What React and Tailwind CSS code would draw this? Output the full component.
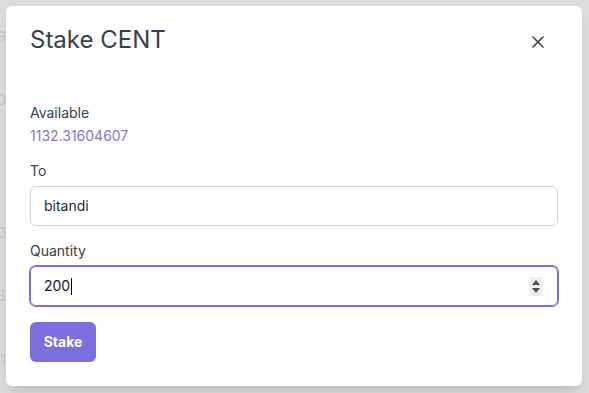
import React from "react";

const Field = ({ label, children }) => (
  <div className="flex flex-col">
    <label className="text-sm leading-5 text-[#374151] mb-[5px]">{label}</label>
    {children}
  </div>
);

const App = () => {
  const behind = [
    { text: "1.08", top: "mt-[27px]" },
    { text: "2.30", top: "mt-[43px]" },
    { text: "4.00", top: "mt-[113px]" },
    { text: "0.28", top: "mt-[43px]" },
    { text: "3.01", top: "mt-[44px]" },
  ];

  return (
    <div
      className="relative w-full h-screen overflow-hidden bg-[#dcdcdf]"
      style={{ fontFamily: "Inter, 'Noto Sans', sans-serif" }}
    >
      {/* page content under the overlay */}
      <div className="flex flex-col -ml-[26px] w-[32px] text-right text-sm leading-5 text-[#c6c6ca]">
        {behind.map((b, i) => (
          <div key={i} className={b.top}>{b.text}</div>
        ))}
      </div>

      {/* modal */}
      <div className="absolute left-[6px] top-[6px] w-[576px] h-[380px] bg-white rounded-md shadow-lg px-6 pt-[18px]">
        <div className="flex items-center justify-between">
          <h2 className="text-2xl leading-8 text-[#374151]">Stake CENT</h2>
          <button className="mr-[14px] mt-[4px] text-[#374151]">
            <svg width="12" height="12" viewBox="0 0 12 12" fill="none" stroke="currentColor" strokeWidth="1.6" strokeLinecap="round">
              <path d="M1 1 L11 11 M11 1 L1 11" />
            </svg>
          </button>
        </div>

        <div className="mt-[47px] flex flex-col">
          <div className="text-sm leading-5 text-[#374151]">Available</div>
          <div className="mt-[3px] text-sm leading-5 text-[#8477d3]">1132.31604607</div>
        </div>

        <div className="mt-[15px]">
          <Field label="To">
            <div className="h-10 w-full rounded-md border border-[#d1d5db] flex items-center px-[13px] text-sm text-[#1f2937]">
              bitandi
            </div>
          </Field>
        </div>

        <div className="mt-[15px]">
          <Field label="Quantity">
            <div className="h-10 w-full rounded-md border border-[#7c70d8] ring-1 ring-[#7c70d8] flex items-center pl-[13px] pr-[14px] text-sm text-[#111827]">
              <span>200</span>
              <span className="ml-[1px] w-px h-[17px] bg-black" />
              <div className="ml-auto w-[14px] h-[19px] bg-[#efefef] flex flex-col items-center justify-center gap-[3px]">
                <svg width="8" height="5" viewBox="0 0 8 5"><path d="M0 5 L4 0 L8 5 Z" fill="#505050" /></svg>
                <svg width="8" height="5" viewBox="0 0 8 5"><path d="M0 0 L8 0 L4 5 Z" fill="#505050" /></svg>
              </div>
            </div>
          </Field>
        </div>

        <button className="mt-[16px] h-10 w-[66px] rounded-md bg-[#7b6fe0] text-white text-sm font-bold">
          Stake
        </button>
      </div>
    </div>
  );
};

export default App;
